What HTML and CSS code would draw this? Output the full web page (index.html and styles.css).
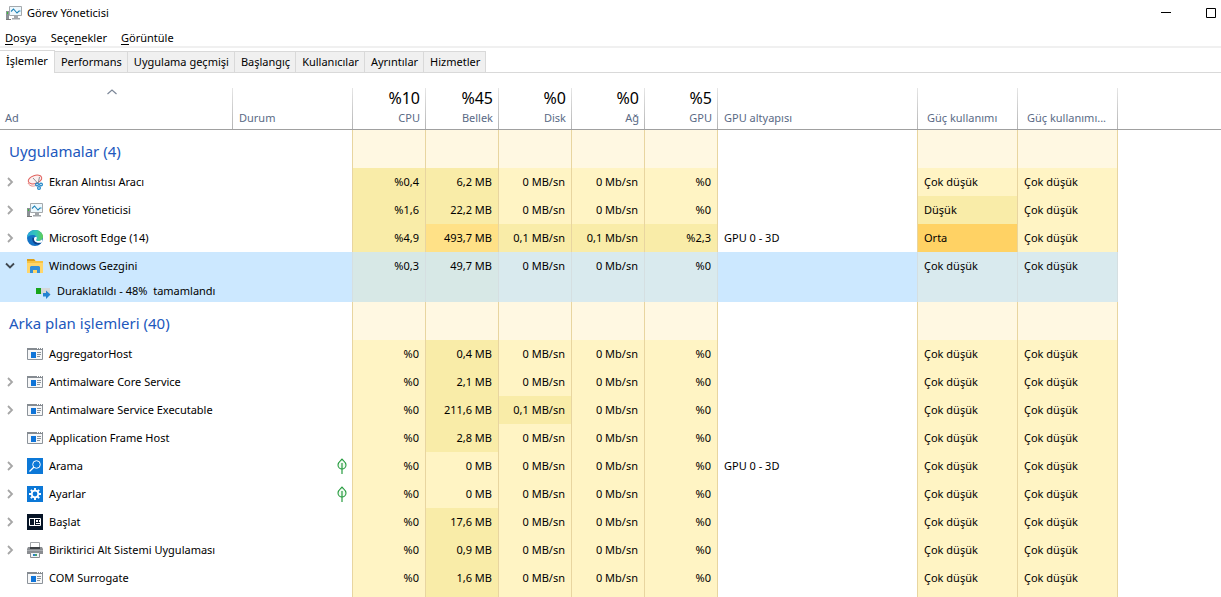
FILE: index.html
```html
<!DOCTYPE html>
<html lang="tr">
<head>
<meta charset="utf-8">
<title>Görev Yöneticisi</title>
<link rel="stylesheet" href="styles.css">
</head>
<body>
<svg class="sprite" aria-hidden="true">
  <symbol id="i-monitor" viewBox="0 0 16 16">
    <path d="M0 6h3v8H0z" fill="#8b9096"/><path d="M0 14h5v1H0z" fill="#777"/><path d="M1 7h1v2H1z" fill="#35c435"/>
    <path d="M3.500 1.500h12v9h-12z" fill="#eef8fd" stroke="#a4a9ad"/>
    <path d="M5 6.500 7.500 4l3.500 4 2-2h1.500" fill="none" stroke="#2385b8" stroke-width="1.100"/>
    <path d="M8 11h4v2h2v1.500H6V13h2z" fill="#a2a6aa"/>
  </symbol>
  <symbol id="i-snip" viewBox="0 0 16 16">
    <ellipse cx="8" cy="5.500" rx="7" ry="4" fill="#fbf0f0" stroke="#e0605c" transform="rotate(-18 8 5.500)"/>
    <path d="M1 9c2 4 6 3.500 9 2" fill="none" stroke="#e88a86"/>
    <path d="m6 4 5 5.500M12.500 3 11 10" stroke="#8b9197"/>
    <circle cx="10" cy="10.500" r="1.400" fill="none" stroke="#1f86c8" stroke-width="1.200"/><circle cx="14" cy="10.500" r="1.400" fill="none" stroke="#1f86c8" stroke-width="1.200"/><circle cx="12" cy="14" r="1.400" fill="none" stroke="#1f86c8" stroke-width="1.200"/>
  </symbol>
  <symbol id="i-edge" viewBox="0 0 16 16">
    <defs><linearGradient id="eg" x1="0" x2="1"><stop offset="0" stop-color="#28a8dc"/><stop offset=".6" stop-color="#36c8b4"/><stop offset="1" stop-color="#62cf4e"/></linearGradient></defs>
    <circle cx="8" cy="8" r="8" fill="#1473c6"/>
    <path d="M0 8C0 3 4 0 8 0c5 0 8 3.500 8 6.500S13.500 11 11 11c-1.500 0-2.200-.7-1.800-1.300C10 8.500 10 5.500 6.500 5 3 4.700.5 6.500 0 8z" fill="url(#eg)"/>
    <path d="M5.500 7.500C4.500 11 7 15 12 14.500l2.800-2C11 14 6.500 12 7 8z" fill="#103f89"/>
    <path d="M9.500 7c.8 1.200 0 2.200-.3 2.700-.4.600.4 1.300 1.800 1.300 1.800 0 3-.6 4-1.500l.5 1.500-.8 1.500C12 13.500 7 12.500 7 9c0-1.500 1.500-2.500 2.500-2z" fill="#fff"/>
  </symbol>
  <symbol id="i-folder" viewBox="0 0 16 16">
    <path d="M0 1h7l1.500 2H16v12H0z" fill="#ffd66b"/><path d="M0 1h7l1.500 2H0z" fill="#dca01c"/><path d="M0 3h16v2H0z" fill="#f8c342"/>
    <path d="M3 15V9l1-1h8l1 1v6h-3v-3H6v3z" fill="#348fd8"/>
  </symbol>
  <symbol id="i-progress" viewBox="0 0 16 16">
    <path d="M1 5h14v6H1z" fill="#d4d8da"/><path d="M1 5h5v6H1z" fill="#17a51b"/>
    <path d="M8 10h3V7.500l4.500 4L11 16v-2.500H8z" fill="#2583d2"/>
  </symbol>
  <symbol id="i-app" viewBox="0 0 16 16">
    <path d="M.5 2.500h15v11H.5z" fill="#f6f7f8" stroke="#8c939a"/><path d="M0 2h16v2H0z" fill="#858b91"/><path d="M10 2h1v1h-1zM12 2h1v1h-1zM14 2h1v1h-1z" fill="#fff"/>
    <path d="M4 6h5v6H4z" fill="#0f74d8"/><path d="M10 6h4v1h-4zM10 8h4v1h-4zM10 10h3v1h-3z" fill="#8c939a"/>
  </symbol>
  <symbol id="i-search" viewBox="0 0 16 16">
    <path d="M0 0h16v16H0z" fill="#0c78d7"/><circle cx="9.500" cy="6.500" r="3.800" fill="none" stroke="#fff"/><path d="m7 9-4.500 4.500" stroke="#fff" stroke-width="1.200"/>
  </symbol>
  <symbol id="i-gear" viewBox="0 0 16 16">
    <path d="M0 0h16v16H0z" fill="#0c78d7"/><circle cx="8" cy="8" r="3.300" fill="none" stroke="#fff" stroke-width="1.800"/>
    <path d="M8 2v2.500M8 11.500V14M2 8h2.500M11.500 8H14M3.800 3.800l1.700 1.700M10.500 10.500l1.700 1.700M12.200 3.800l-1.700 1.700M5.500 10.500l-1.700 1.700" stroke="#fff" stroke-width="1.900"/>
  </symbol>
  <symbol id="i-start" viewBox="0 0 16 16">
    <path d="M0 0h16v16H0z" fill="#061426"/><path d="M2.500 4.500h11v7h-11z" fill="none" stroke="#fff"/>
    <path d="M7 5h1v6H7zM9 6h2v2H9zM12 6h1v2h-1zM9 9h4v1H9z" fill="#fff"/>
  </symbol>
  <symbol id="i-printer" viewBox="0 0 16 16">
    <path d="M3.500.5h9V6h-9z" fill="#fff" stroke="#a4a7aa"/><path d="M1 5h14l1 2v5H0V7z" fill="#8a8d91"/><path d="M3 5h10v2H3z" fill="#3e4145"/><path d="M0 8h16v1H0z" fill="#a9acb0"/>
    <path d="M3.500 10.500h9v5h-9z" fill="#eef3f6" stroke="#8b8e92"/><path d="M6 12h2v2H6z" fill="#2a7fc4"/><path d="M8 12h2v2H8z" fill="#48a06a"/>
  </symbol>
  <symbol id="i-leaf" viewBox="0 0 10 16">
    <path d="M5 1.200C3.500 3 1 4 1 7c0 2.500 2 4 4 4s4-1.500 4-4c0-3-2.500-4-4-5.800z" fill="#effaf0" stroke="#259b3e" stroke-width="1.100"/><path d="M5 5v11" stroke="#259b3e" stroke-width="1.200"/>
  </symbol>
  <symbol id="i-right" viewBox="0 0 10 10"><path d="m3 1 4 4-4 4" fill="none" stroke="#a6a6a6" stroke-width="1.800"/></symbol>
  <symbol id="i-down" viewBox="0 0 10 8"><path d="m1 1.500 4 4 4-4" fill="none" stroke="#404850" stroke-width="1.800"/></symbol>
</svg>
<div class="window">
  <header class="titlebar">
    <svg class="icon"><use href="#i-monitor"/></svg>
    <h1 class="title">Görev Yöneticisi</h1>
    <button class="winbtn" aria-label="Simge durumuna küçült"><svg class="glyph" viewBox="0 0 10 10"><path d="M0 4.500h10" stroke="#000"/></svg></button>
    <button class="winbtn" aria-label="Ekranı kapla"><svg class="glyph" viewBox="0 0 10 10"><path d="M.5.500h9v9h-9z" fill="none" stroke="#000"/></svg></button>
  </header>
  <nav class="menubar">
    <button class="menu"><u>D</u>osya</button>
    <button class="menu">Seçe<u>n</u>ekler</button>
    <button class="menu"><u>G</u>örüntüle</button>
  </nav>
  <div class="tabs" role="tablist">
    <button class="tab active" role="tab" aria-selected="true">İşlemler</button>
    <button class="tab" role="tab">Performans</button>
    <button class="tab" role="tab">Uygulama geçmişi</button>
    <button class="tab" role="tab">Başlangıç</button>
    <button class="tab" role="tab">Kullanıcılar</button>
    <button class="tab" role="tab">Ayrıntılar</button>
    <button class="tab" role="tab">Hizmetler</button>
  </div>
  <main class="panel">
  <table class="grid">
    <colgroup><col class="c-name"><col class="c-status"><col class="c-num"><col class="c-num"><col class="c-num"><col class="c-num"><col class="c-num"><col class="c-engine"><col class="c-power"><col class="c-power"><col></colgroup>
    <thead>
      <tr>
        <th class="first"><svg class="sort" viewBox="0 0 10 6"><path d="m.5 5 4.500-4 4.500 4" fill="none" stroke="#7c8798" stroke-width="1.200"/></svg>Ad</th>
        <th>Durum</th>
        <th class="num"><span class="total">%10</span>CPU</th>
        <th class="num"><span class="total">%45</span>Bellek</th>
        <th class="num"><span class="total">%0</span>Disk</th>
        <th class="num"><span class="total">%0</span>Ağ</th>
        <th class="num"><span class="total">%5</span>GPU</th>
        <th>GPU altyapısı</th>
        <th class="power">Güç kullanımı</th>
        <th class="power">Güç kullanımı...</th>
        <th class="rest"></th>
      </tr>
    </thead>
    <tbody>
      <tr class="group"><th colspan="2" class="line">Uygulamalar (4)</th><td class="hg"></td><td class="hg"></td><td class="hg"></td><td class="hg"></td><td class="hg"></td><td class="line"></td><td class="hg"></td><td class="hg"></td><td></td></tr>
      <tr><td><div class="proc"><button class="exp" aria-label="Genişlet"><svg class="right"><use href="#i-right"/></svg></button><svg class="icon"><use href="#i-snip"/></svg>Ekran Alıntısı Aracı</div></td><td class="line"></td><td class="h1">%0,4</td><td class="h1">6,2 MB</td><td class="h0">0 MB/sn</td><td class="h0">0 Mb/sn</td><td class="h0">%0</td><td class="line"></td><td class="h0 text">Çok düşük</td><td class="h0 text">Çok düşük</td><td></td></tr>
      <tr><td><div class="proc"><button class="exp" aria-label="Genişlet"><svg class="right"><use href="#i-right"/></svg></button><svg class="icon"><use href="#i-monitor"/></svg>Görev Yöneticisi</div></td><td class="line"></td><td class="h1">%1,6</td><td class="h1">22,2 MB</td><td class="h0">0 MB/sn</td><td class="h0">0 Mb/sn</td><td class="h0">%0</td><td class="line"></td><td class="h1 text">Düşük</td><td class="h0 text">Çok düşük</td><td></td></tr>
      <tr><td><div class="proc"><button class="exp" aria-label="Genişlet"><svg class="right"><use href="#i-right"/></svg></button><svg class="icon"><use href="#i-edge"/></svg>Microsoft Edge (14)</div></td><td class="line"></td><td class="h1">%4,9</td><td class="h2">493,7 MB</td><td class="h1">0,1 MB/sn</td><td class="h1">0,1 Mb/sn</td><td class="h1">%2,3</td><td class="line">GPU 0 - 3D</td><td class="h3 text">Orta</td><td class="h0 text">Çok düşük</td><td></td></tr>
      <tr class="sel"><td><div class="proc"><button class="exp" aria-label="Daralt"><svg class="down"><use href="#i-down"/></svg></button><svg class="icon"><use href="#i-folder"/></svg>Windows Gezgini</div></td><td class="line"></td><td class="h1">%0,3</td><td class="h1">49,7 MB</td><td class="h0">0 MB/sn</td><td class="h0">0 Mb/sn</td><td class="h0">%0</td><td class="line"></td><td class="h0 text">Çok düşük</td><td class="h0 text">Çok düşük</td><td></td></tr>
      <tr class="sel sub"><td><div class="child"><svg class="icon"><use href="#i-progress"/></svg>Duraklatıldı - 48%&nbsp; tamamlandı</div></td><td class="line"></td><td class="h1"></td><td class="h1"></td><td class="h0"></td><td class="h0"></td><td class="h0"></td><td class="line"></td><td class="h0"></td><td class="h0"></td><td></td></tr>
      <tr class="group"><th colspan="2" class="line">Arka plan işlemleri (40)</th><td class="hg"></td><td class="hg"></td><td class="hg"></td><td class="hg"></td><td class="hg"></td><td class="line"></td><td class="hg"></td><td class="hg"></td><td></td></tr>
      <tr><td><div class="proc"><span class="exp"></span><svg class="icon"><use href="#i-app"/></svg>AggregatorHost</div></td><td class="line"></td><td class="h0">%0</td><td class="h1">0,4 MB</td><td class="h0">0 MB/sn</td><td class="h0">0 Mb/sn</td><td class="h0">%0</td><td class="line"></td><td class="h0 text">Çok düşük</td><td class="h0 text">Çok düşük</td><td></td></tr>
      <tr><td><div class="proc"><button class="exp" aria-label="Genişlet"><svg class="right"><use href="#i-right"/></svg></button><svg class="icon"><use href="#i-app"/></svg>Antimalware Core Service</div></td><td class="line"></td><td class="h0">%0</td><td class="h1">2,1 MB</td><td class="h0">0 MB/sn</td><td class="h0">0 Mb/sn</td><td class="h0">%0</td><td class="line"></td><td class="h0 text">Çok düşük</td><td class="h0 text">Çok düşük</td><td></td></tr>
      <tr><td><div class="proc"><button class="exp" aria-label="Genişlet"><svg class="right"><use href="#i-right"/></svg></button><svg class="icon"><use href="#i-app"/></svg>Antimalware Service Executable</div></td><td class="line"></td><td class="h0">%0</td><td class="h1">211,6 MB</td><td class="h1">0,1 MB/sn</td><td class="h0">0 Mb/sn</td><td class="h0">%0</td><td class="line"></td><td class="h0 text">Çok düşük</td><td class="h0 text">Çok düşük</td><td></td></tr>
      <tr><td><div class="proc"><span class="exp"></span><svg class="icon"><use href="#i-app"/></svg>Application Frame Host</div></td><td class="line"></td><td class="h0">%0</td><td class="h1">2,8 MB</td><td class="h0">0 MB/sn</td><td class="h0">0 Mb/sn</td><td class="h0">%0</td><td class="line"></td><td class="h0 text">Çok düşük</td><td class="h0 text">Çok düşük</td><td></td></tr>
      <tr><td><div class="proc"><button class="exp" aria-label="Genişlet"><svg class="right"><use href="#i-right"/></svg></button><svg class="icon"><use href="#i-search"/></svg>Arama</div></td><td class="line status"><svg class="leaf"><use href="#i-leaf"/></svg></td><td class="h0">%0</td><td class="h0">0 MB</td><td class="h0">0 MB/sn</td><td class="h0">0 Mb/sn</td><td class="h0">%0</td><td class="line">GPU 0 - 3D</td><td class="h0 text">Çok düşük</td><td class="h0 text">Çok düşük</td><td></td></tr>
      <tr><td><div class="proc"><button class="exp" aria-label="Genişlet"><svg class="right"><use href="#i-right"/></svg></button><svg class="icon"><use href="#i-gear"/></svg>Ayarlar</div></td><td class="line status"><svg class="leaf"><use href="#i-leaf"/></svg></td><td class="h0">%0</td><td class="h0">0 MB</td><td class="h0">0 MB/sn</td><td class="h0">0 Mb/sn</td><td class="h0">%0</td><td class="line"></td><td class="h0 text">Çok düşük</td><td class="h0 text">Çok düşük</td><td></td></tr>
      <tr><td><div class="proc"><button class="exp" aria-label="Genişlet"><svg class="right"><use href="#i-right"/></svg></button><svg class="icon"><use href="#i-start"/></svg>Başlat</div></td><td class="line"></td><td class="h0">%0</td><td class="h1">17,6 MB</td><td class="h0">0 MB/sn</td><td class="h0">0 Mb/sn</td><td class="h0">%0</td><td class="line"></td><td class="h0 text">Çok düşük</td><td class="h0 text">Çok düşük</td><td></td></tr>
      <tr><td><div class="proc"><button class="exp" aria-label="Genişlet"><svg class="right"><use href="#i-right"/></svg></button><svg class="icon"><use href="#i-printer"/></svg>Biriktirici Alt Sistemi Uygulaması</div></td><td class="line"></td><td class="h0">%0</td><td class="h1">0,9 MB</td><td class="h0">0 MB/sn</td><td class="h0">0 Mb/sn</td><td class="h0">%0</td><td class="line"></td><td class="h0 text">Çok düşük</td><td class="h0 text">Çok düşük</td><td></td></tr>
      <tr><td><div class="proc"><span class="exp"></span><svg class="icon"><use href="#i-app"/></svg>COM Surrogate</div></td><td class="line"></td><td class="h0">%0</td><td class="h1">1,6 MB</td><td class="h0">0 MB/sn</td><td class="h0">0 Mb/sn</td><td class="h0">%0</td><td class="line"></td><td class="h0 text">Çok düşük</td><td class="h0 text">Çok düşük</td><td></td></tr>
      <tr><td></td><td class="line"></td><td class="h0"></td><td class="h1"></td><td class="h0"></td><td class="h0"></td><td class="h0"></td><td class="line"></td><td class="h0"></td><td class="h0"></td><td></td></tr>
    </tbody>
  </table>
  </main>
</div>
</body>
</html>
```
FILE: styles.css
```css
* { box-sizing: border-box; }
body {
  margin: 0;
  background: #fff;
  color: #000;
  font: 11px/16px "Noto Sans", "Open Sans", sans-serif;
}
button { font: inherit; color: inherit; border: 0; padding: 0; background: none; }
svg { display: block; flex: none; }
.sprite { position: absolute; width: 0; height: 0; }
.window { display: flex; flex-direction: column; height: 100vh; overflow: hidden; }
.icon { width: 16px; height: 16px; }

.titlebar { display: flex; align-items: center; height: 25px; flex: none; padding-left: 6px; gap: 5px; }
.title { margin: 0; flex: 1; font-size: 11px; font-weight: 400; }
.winbtn { width: 40px; height: 24px; display: flex; align-items: center; justify-content: flex-end; padding-right: 5px; }
.glyph { width: 10px; height: 10px; }
.menubar { display: flex; align-items: flex-end; gap: 14px; height: 23px; flex: none; padding-left: 5px; border-bottom: 2px solid #f0f0f0; }
.menu u { text-underline-offset: 2px; }

.tabs { display: flex; align-items: flex-end; flex: none; height: 25px; border-bottom: 1px solid #d9d9d9; }
.tab { height: 21px; padding: 0 5px 0 6px; background: #f0f0f0; border: 1px solid #d9d9d9; border-left: 0; border-bottom: 0; white-space: nowrap; }
.tab.active { height: 23px; margin-bottom: -1px; padding: 0 6px 3px; background: #fff; }

.panel { flex: 1; min-height: 0; overflow: hidden; padding-top: 15px; }
.grid { width: 100%; table-layout: fixed; border-collapse: separate; border-spacing: 0; }
.c-name { width: 233px; }
.c-status { width: 120px; }
.c-num { width: 73px; }
.c-engine { width: 200px; }
.c-power { width: 100px; }

.grid th { font-weight: 400; text-align: left; }
thead th {
  height: 42px;
  padding: 0 6px 3px;
  vertical-align: bottom;
  color: #5a6a85;
  white-space: nowrap;
  border-bottom: 1px solid #a0a0a0;
  background: linear-gradient(#e6e6e6, #b4b4b4) right / 1px 100% no-repeat;
}
thead .first { padding-left: 5px; }
thead .num { text-align: right; }
thead .power { padding-left: 9px; }
thead .rest { background: none; }
.sort { width: 10px; height: 6px; margin: 0 auto 15px 102px; }
.total { display: block; font-size: 16px; line-height: 20px; padding-bottom: 2px; color: #000; }

.grid td { height: 28px; padding: 0 6px; white-space: nowrap; }
.grid .group th { height: 38px; padding: 4px 9px 0; font-size: 15px; color: #2158bd; }
.grid .sub td { height: 22px; }
.grid td:first-child { padding: 0; }
.line, .hg, .h0, .h1, .h2, .h3 { border-right: 1px solid #e8d5a0; }
.h0, .h1, .h2, .h3 { text-align: right; }
.hg { background: #fff8e2; }
.h0 { background: #fff4c4; }
.h1 { background: #f9eca8; }
.h2 { background: #ffe187; }
.h3 { background: #ffd264; }
.grid .text { text-align: left; }
.grid .status { padding-right: 5px; }
.sel td { background: #cce8ff; border-color: #d5dfe1; }
.sel .h0 { background: #d9eaee; }
.sel .h1 { background: #d7e8e6; }
.sel td:last-child { background: #fff; }

.proc { display: flex; align-items: center; gap: 6px; padding-left: 5px; }
.exp { display: flex; width: 16px; height: 16px; align-items: center; }
.right { width: 10px; height: 10px; }
.down { width: 10px; height: 8px; }
.child { display: flex; align-items: center; gap: 6px; padding-left: 35px; }
.leaf { width: 10px; height: 16px; margin-left: auto; }
```
